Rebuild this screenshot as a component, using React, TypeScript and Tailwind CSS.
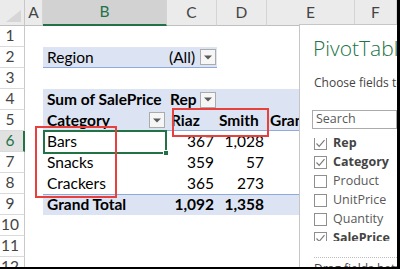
import React from 'react';

const PB = 'bg-[#DCE3F2]';

function DropBtn() {
  return (
    <div className="w-[16px] h-[16px] shrink-0 border border-[#ABABAB] bg-[#F6F6F6] flex items-center justify-center">
      <svg width="8" height="5" viewBox="0 0 8 5">
        <path d="M0 0.5 H8 L4 4.5 Z" fill="#5A5A5A" />
      </svg>
    </div>
  );
}

function RowHead({ n, sel = false }: { n: number; sel?: boolean }) {
  return (
    <div
      className={`w-[25px] shrink-0 h-full flex items-center border-b border-b-[#DADADA] ${
        sel
          ? 'bg-[#E1E1E1] text-[#217346] border-r-2 border-r-[#217346]'
          : 'bg-white text-[#444444] border-r border-r-[#C8C8C8]'
      }`}
    >
      <span className="w-[20px] text-center">{n}</span>
    </div>
  );
}

function Row({ n, sel, children }: { n: number; sel?: boolean; children?: React.ReactNode }) {
  return (
    <div className="flex h-[21px] shrink-0">
      <RowHead n={n} sel={sel} />
      <div className="w-[18px] shrink-0" />
      {children}
    </div>
  );
}

function ColHead({ w, label, sel = false }: { w: string; label: string; sel?: boolean }) {
  return (
    <div
      className={`${w} shrink-0 h-full flex items-center justify-center border-r border-r-[#D4D4D4] ${
        sel
          ? 'bg-[#D2D2D2] text-[#217346] border-b-2 border-b-[#217346]'
          : 'bg-[#EBEBEB] text-[#444444] border-b border-b-[#BFBFBF]'
      }`}
    >
      {label}
    </div>
  );
}

function Check() {
  return (
    <svg width="11" height="11" viewBox="0 0 11 11">
      <path d="M1.5 5.5 L4.2 8.3 L9.5 2.2" fill="none" stroke="#7A7A7A" strokeWidth="1.2" />
    </svg>
  );
}

const fields = [
  { name: 'Rep', checked: true },
  { name: 'Category', checked: true },
  { name: 'Product', checked: false },
  { name: 'UnitPrice', checked: false },
  { name: 'Quantity', checked: false },
  { name: 'SalePrice', checked: true },
];

export default function App() {
  return (
    <div className="relative w-[400px] h-[269px] overflow-hidden bg-white border-r-[3px] border-b-[2px] border-black font-['Lato',sans-serif] text-[15.5px] text-black leading-none">
      <div className="flex flex-col w-[397px]">
        {/* column header */}
        <div className="flex h-[26px] shrink-0">
          <div className="w-[25px] shrink-0 h-full bg-[#EBEBEB] border-r border-r-[#C8C8C8] border-b border-b-[#BFBFBF] flex items-end justify-end pr-[3px] pb-[3px]">
            <svg width="15" height="12" viewBox="0 0 15 12">
              <polygon points="15,0 15,12 0,12" fill="#D6D6D6" />
            </svg>
          </div>
          <ColHead w="w-[18px]" label="A" />
          <ColHead w="w-[124px]" label="B" sel />
          <ColHead w="w-[50px]" label="C" />
          <ColHead w="w-[50px]" label="D" />
          <ColHead w="w-[88px]" label="E" />
          <ColHead w="flex-1" label="F" />
        </div>

        <Row n={1} />
        <Row n={2}>
          <div className={`w-[124px] shrink-0 h-full flex items-center pl-[4px] pt-[1px] ${PB} border-b border-[#8EA9DB]`}>
            Region
          </div>
          <div className={`w-[50px] shrink-0 h-full flex items-center justify-between pl-[2px] pr-[1px] ${PB} border-b border-[#8EA9DB]`}>
            <span className="pt-[1px]">(All)</span>
            <DropBtn />
          </div>
        </Row>
        <Row n={3} />
        <Row n={4}>
          <div className={`flex-1 h-full flex items-center ${PB} font-bold`}>
            <div className="w-[124px] shrink-0 pl-[4px] pt-[1px] whitespace-nowrap">Sum of SalePrice</div>
            <div className="w-[50px] shrink-0 flex items-center justify-between pl-[3px] pr-[1px]">
              <span className="pt-[1px]">Rep</span>
              <DropBtn />
            </div>
          </div>
        </Row>
        <Row n={5}>
          <div className={`flex-1 h-full flex items-center ${PB} font-bold border-b border-[#8EA9DB]`}>
            <div className="w-[124px] shrink-0 flex items-center justify-between pl-[4px] pr-[2px]">
              <span className="pt-[1px]">Category</span>
              <DropBtn />
            </div>
            <div className="w-[50px] shrink-0 pl-[4px] pt-[1px]">Riaz</div>
            <div className="w-[50px] shrink-0 pl-[2px] pt-[1px]">Smith</div>
            <div className="w-[88px] shrink-0 pl-[3px] pt-[1px] whitespace-nowrap">Grand Total</div>
          </div>
        </Row>
        {[
          { n: 6, c: 'Bars', a: '367', b: '1,028' },
          { n: 7, c: 'Snacks', a: '359', b: '57' },
          { n: 8, c: 'Crackers', a: '365', b: '273' },
        ].map((r) => (
          <Row key={r.n} n={r.n} sel={r.n === 6}>
            <div className="w-[124px] shrink-0 h-full flex items-center pl-[4px] pt-[1px]">{r.c}</div>
            <div className="w-[50px] shrink-0 h-full flex items-center justify-end pr-[3px] pt-[1px]">{r.a}</div>
            <div className="w-[50px] shrink-0 h-full flex items-center justify-end pr-[3px] pt-[1px]">{r.b}</div>
          </Row>
        ))}
        <Row n={9}>
          <div className={`flex-1 h-full flex items-center ${PB} font-bold border-t border-[#8EA9DB]`}>
            <div className="w-[124px] shrink-0 pl-[4px]">Grand Total</div>
            <div className="w-[50px] shrink-0 text-right pr-[3px]">1,092</div>
            <div className="w-[50px] shrink-0 text-right pr-[3px]">1,358</div>
          </div>
        </Row>
        <Row n={10} />
        <Row n={11} />
        <Row n={12} />
      </div>

      {/* active cell selection */}
      <div className="absolute left-[43px] top-[130px] w-[124px] h-[24px] border-2 border-[#217346]" />
      <div className="absolute left-[163px] top-[150px] w-[6px] h-[6px] bg-[#217346] border border-white" />

      {/* red highlight boxes */}
      <div className="absolute left-[172px] top-[108px] w-[97px] h-[29px] border-2 border-[#E8403D]" />
      <div className="absolute left-[35px] top-[126px] w-[82px] h-[72px] border-2 border-[#E8403D]" />

      {/* PivotTable Fields pane */}
      <div className="absolute left-[299px] top-[24px] right-0 bottom-0 bg-white border-l border-t border-[#C6C6C6] overflow-hidden font-['Open_Sans',sans-serif] pl-[14px] flex flex-col whitespace-nowrap">
        <div className="mt-[9px] h-[28px] leading-[28px] text-[21px] font-light text-[#217346] -ml-[1px] shrink-0">
          PivotTable Fields
        </div>
        <div className="mt-[13px] h-[16px] leading-[16px] text-[12px] text-[#444444] shrink-0">
          Choose fields to add to report:
        </div>
        <div className="mt-[19px] h-[19px] -ml-[2px] border border-[#ABABAB] text-[12.5px] text-[#595959] flex items-center pl-[3px] shrink-0">
          Search
        </div>
        <div className="mt-[9px] h-[103px] overflow-hidden shrink-0">
          <div className="-mt-[4px] flex flex-col">
            {fields.map((f) => (
              <div key={f.name} className="h-[19px] flex items-center gap-[6px] shrink-0">
                <div className="w-[13px] h-[13px] border border-[#8F8F8F] bg-white flex items-center justify-center shrink-0">
                  {f.checked && <Check />}
                </div>
                <span
                  className={`text-[12.5px] ${f.checked ? 'font-bold text-[#444444]' : 'text-[#595959]'}`}
                >
                  {f.name}
                </span>
              </div>
            ))}
          </div>
        </div>
        <div className="mt-[16px] border-t border-dotted border-[#BFBFBF] shrink-0" />
        <div className="mt-[3px] text-[12px] text-[#444444] leading-[16px] shrink-0">
          Drag fields between areas below:
        </div>
      </div>
    </div>
  );
}
